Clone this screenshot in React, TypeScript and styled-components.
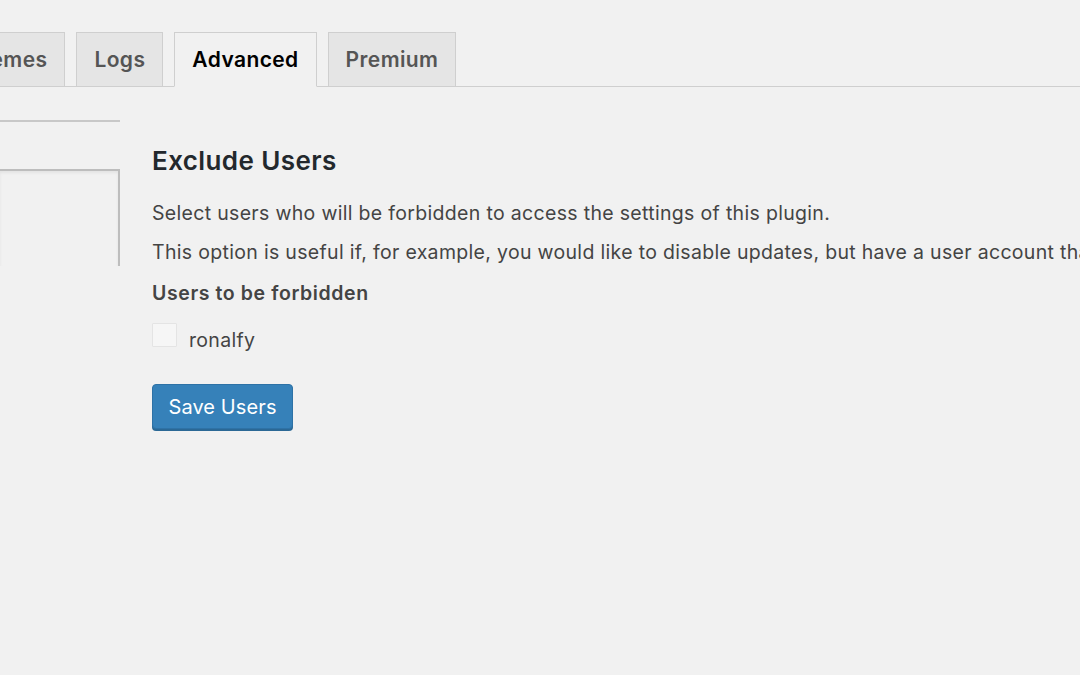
import React from "react";
import styled, { createGlobalStyle } from "styled-components";

const Global = createGlobalStyle`
  html, body {
    margin: 0;
    padding: 0;
    background: #f1f1f1;
    font-family: Inter, "Open Sans", Arial, sans-serif;
    color: #444;
    overflow: hidden;
  }
`;

const Page = styled.div`
  width: 1080px;
  height: 675px;
  overflow: hidden;
  background: #f1f1f1;
`;

const TabBar = styled.nav`
  display: flex;
  align-items: flex-end;
  gap: 11px;
  height: 87px;
  border-bottom: 1px solid #cfcfcf;
  margin-left: -55px;
  box-sizing: border-box;
`;

const Tab = styled.a<{ $active?: boolean }>`
  display: flex;
  align-items: center;
  height: 55px;
  box-sizing: border-box;
  padding: 0 17px;
  margin-bottom: -1px;
  border: 1px solid #cfcfcf;
  border-bottom-color: ${(p) => (p.$active ? "#f1f1f1" : "#cfcfcf")};
  background: ${(p) => (p.$active ? "#f1f1f1" : "#e5e5e5")};
  color: ${(p) => (p.$active ? "#000" : "#555")};
  font-weight: 600;
  font-size: 21px;
  letter-spacing: 0.4px;
  text-decoration: none;
`;

const Body = styled.div`
  display: flex;
  gap: 32px;
`;

const Sidebar = styled.aside`
  width: 120px;
  flex: none;
  display: flex;
  flex-direction: column;
`;

const SideRule = styled.div`
  height: 33px;
  border-bottom: 2px solid #c8c8c8;
`;

const SideBox = styled.div`
  margin-top: 47px;
  height: 95px;
  border-top: 2px solid #bdbdbd;
  border-right: 2px solid #bdbdbd;
  box-shadow: inset 0 2px 3px rgba(0, 0, 0, 0.06);
`;

const Content = styled.section`
  padding-top: 58px;
  display: flex;
  flex-direction: column;
`;

const Heading = styled.h2`
  margin: 0;
  padding-top: 1px;
  font-size: 26px;
  line-height: 30px;
  font-weight: 600;
  letter-spacing: 0.4px;
  color: #23282d;
`;

const Para = styled.p<{ $gap: number }>`
  margin: ${(p) => p.$gap}px 0 0;
  font-size: 19.5px;
  line-height: 26px;
  letter-spacing: 0.32px;
  white-space: nowrap;
  color: #444;
`;

const Label = styled.div`
  margin-top: 15px;
  font-size: 19.5px;
  line-height: 26px;
  font-weight: 600;
  letter-spacing: 0.6px;
  color: #444;
`;

const CheckRow = styled.label`
  margin-top: 17px;
  display: flex;
  align-items: center;
  gap: 12px;
  height: 24px;
  font-size: 19.5px;
  letter-spacing: 0.3px;
  color: #444;
`;

const Box = styled.span`
  width: 25px;
  height: 24px;
  box-sizing: border-box;
  border: 1px solid #e4e4e4;
  background: #f6f6f6;
  border-radius: 1px;
`;

const CheckText = styled.span`
  padding-top: 10px;
`;

const Button = styled.button`
  margin-top: 37px;
  align-self: flex-start;
  width: 141px;
  height: 45px;
  border: 1px solid #2e72a6;
  border-radius: 4px;
  background: #3681b9;
  box-shadow: 0 2px 0 #2b6895;
  color: #fff;
  font-family: Inter, "Open Sans", Arial, sans-serif;
  font-size: 20px;
  letter-spacing: 0.1px;
  padding: 0;
`;

export default function App() {
  return (
    <Page>
      <Global />
      <TabBar>
        <Tab>Themes</Tab>
        <Tab>Logs</Tab>
        <Tab $active>Advanced</Tab>
        <Tab>Premium</Tab>
      </TabBar>
      <Body>
        <Sidebar>
          <SideRule />
          <SideBox />
        </Sidebar>
        <Content>
          <Heading>Exclude Users</Heading>
          <Para $gap={24}>Select users who will be forbidden to access the settings of this plugin.</Para>
          <Para $gap={13}>
            This option is useful if, for example, you would like to disable updates, but have a user account that should not be able to re-enable them.
          </Para>
          <Label>Users to be forbidden</Label>
          <CheckRow>
            <Box />
            <CheckText>ronalfy</CheckText>
          </CheckRow>
          <Button>Save Users</Button>
        </Content>
      </Body>
    </Page>
  );
}
